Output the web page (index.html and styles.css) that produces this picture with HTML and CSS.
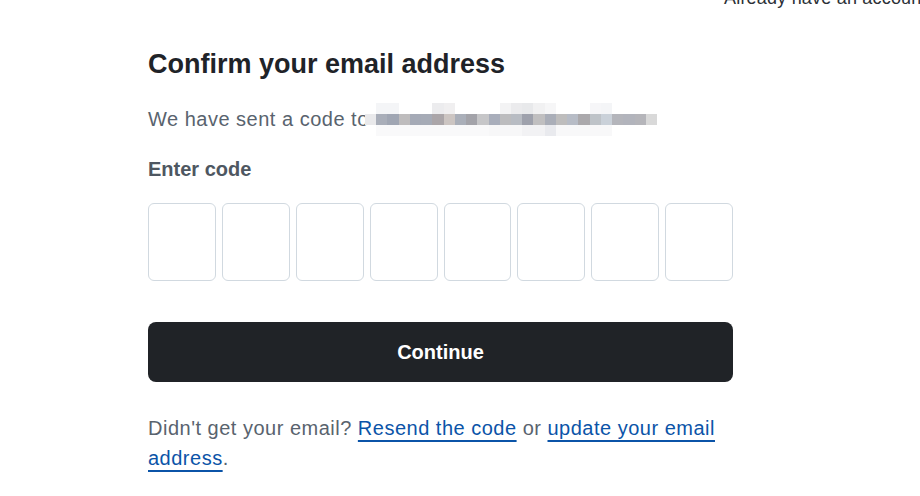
FILE: index.html
```html
<!DOCTYPE html>
<html lang="en">
<head>
<meta charset="utf-8">
<title>Confirm your email address</title>
<link rel="stylesheet" href="styles.css">
</head>
<body>
<div class="topbar">Already have an account? <a class="signin" href="#">Sign in</a></div>
<main class="panel">
  <h1 class="title">Confirm your email address</h1>
  <div class="sent">
    <span class="sent-text">We have sent a code to</span>
    <svg class="blur" viewBox="0 0 26 3" preserveAspectRatio="none" shape-rendering="crispEdges" aria-hidden="true">
      <g>
        <rect x="1" y="0" width="2" height="1" fill="#f4f5f7"/>
        <rect x="6" y="0" width="1" height="1" fill="#ececee"/>
        <rect x="7" y="0" width="1" height="1" fill="#f0eff0"/>
        <rect x="12" y="0" width="1" height="1" fill="#f3f3f4"/>
        <rect x="13" y="0" width="1" height="1" fill="#ebebed"/>
        <rect x="14" y="0" width="1" height="1" fill="#e8e9eb"/>
        <rect x="15" y="0" width="1" height="1" fill="#f1f1f2"/>
        <rect x="16" y="0" width="1" height="1" fill="#f6f6f7"/>
        <rect x="20" y="0" width="1" height="1" fill="#f6f6f8"/>
        <rect x="21" y="0" width="1" height="1" fill="#f4f5f7"/>
      </g>
      <g>
        <rect x="0" y="1" width="1" height="1" fill="#e9e9eb"/>
        <rect x="1" y="1" width="1" height="1" fill="#a9aeb9"/>
        <rect x="2" y="1" width="1" height="1" fill="#a0a6b3"/>
        <rect x="3" y="1" width="1" height="1" fill="#bebcbd"/>
        <rect x="4" y="1" width="1" height="1" fill="#a5aab6"/>
        <rect x="5" y="1" width="1" height="1" fill="#a6abb6"/>
        <rect x="6" y="1" width="1" height="1" fill="#aba6a9"/>
        <rect x="7" y="1" width="1" height="1" fill="#ccc5c2"/>
        <rect x="8" y="1" width="1" height="1" fill="#aaafb9"/>
        <rect x="9" y="1" width="1" height="1" fill="#a3a3a9"/>
        <rect x="10" y="1" width="1" height="1" fill="#c6c6c8"/>
        <rect x="11" y="1" width="1" height="1" fill="#a9aebb"/>
        <rect x="12" y="1" width="1" height="1" fill="#bcbcbe"/>
        <rect x="13" y="1" width="1" height="1" fill="#b8bcc3"/>
        <rect x="14" y="1" width="1" height="1" fill="#9ea1ac"/>
        <rect x="15" y="1" width="1" height="1" fill="#c0bfc0"/>
        <rect x="16" y="1" width="1" height="1" fill="#aaaeb8"/>
        <rect x="17" y="1" width="1" height="1" fill="#bebdbd"/>
        <rect x="18" y="1" width="1" height="1" fill="#b7bcc6"/>
        <rect x="19" y="1" width="1" height="1" fill="#aba9ac"/>
        <rect x="20" y="1" width="1" height="1" fill="#bec3c8"/>
        <rect x="21" y="1" width="1" height="1" fill="#cad1d9"/>
        <rect x="22" y="1" width="1" height="1" fill="#b4b5bb"/>
        <rect x="23" y="1" width="1" height="1" fill="#b2b4bc"/>
        <rect x="24" y="1" width="1" height="1" fill="#b5b5ba"/>
        <rect x="25" y="1" width="1" height="1" fill="#d9d9d9"/>
      </g>
      <g>
        <rect x="1" y="2" width="10" height="1" fill="#f9f9fa"/>
        <rect x="11" y="2" width="3" height="1" fill="#f7f7f8"/>
        <rect x="14" y="2" width="2" height="1" fill="#f2f2f4"/>
        <rect x="16" y="2" width="1" height="1" fill="#e9eaee"/>
        <rect x="17" y="2" width="5" height="1" fill="#f8f8f9"/>
      </g>
    </svg>
  </div>
  <label class="label">Enter code</label>
  <div class="code">
    <input class="digit" type="text" maxlength="1">
    <input class="digit" type="text" maxlength="1">
    <input class="digit" type="text" maxlength="1">
    <input class="digit" type="text" maxlength="1">
    <input class="digit" type="text" maxlength="1">
    <input class="digit" type="text" maxlength="1">
    <input class="digit" type="text" maxlength="1">
    <input class="digit" type="text" maxlength="1">
  </div>
  <button class="continue" type="button">Continue</button>
  <p class="help">Didn't get your email? <a class="link" href="#">Resend the code</a> or <a class="link" href="#">update your email address</a>.</p>
</main>
</body>
</html>
```

FILE: styles.css
```css
html, body {
  margin: 0;
  padding: 0;
  background: #ffffff;
}
body {
  font-family: "Liberation Sans", Arial, sans-serif;
  color: #1f2328;
  overflow: hidden;
  height: 496px;
}
.topbar {
  margin-top: -12px;
  height: 20px;
  line-height: 20px;
  padding-left: 724px;
  font-size: 18px;
  letter-spacing: 0.2px;
  color: #2b3036;
  white-space: nowrap;
}
.signin {
  color: #0b54a8;
}
.panel {
  width: 585px;
  margin-left: 148px;
  display: flex;
  flex-direction: column;
}
.title {
  margin: 39px 0 0;
  font-size: 27px;
  line-height: 34px;
  font-weight: 700;
  color: #1f2328;
}
.sent {
  margin-top: 26px;
  height: 24px;
  display: flex;
  align-items: center;
  font-size: 20px;
  letter-spacing: 0.5px;
  color: #59636e;
}
.sent-text {
  white-space: nowrap;
  line-height: 24px;
}
.blur {
  flex: none;
  width: 292px;
  height: 33px;
  margin-left: -4px;
}
.label {
  margin-top: 26px;
  font-size: 20px;
  line-height: 24px;
  font-weight: 700;
  color: #4e5761;
}
.code {
  margin-top: 22px;
  display: flex;
  gap: 6px;
}
.digit {
  flex: 1 1 0;
  min-width: 0;
  height: 78px;
  box-sizing: border-box;
  border: 1px solid #d1d9e0;
  border-radius: 6px;
  background: #ffffff;
  padding: 0;
  font-size: 28px;
  text-align: center;
  outline: none;
}
.continue {
  margin-top: 41px;
  height: 60px;
  border: 0;
  border-radius: 8px;
  background: #202327;
  color: #ffffff;
  font-family: "Liberation Sans", Arial, sans-serif;
  font-size: 20px;
  font-weight: 700;
}
.help {
  margin: 31px 0 0;
  font-size: 20px;
  letter-spacing: 0.5px;
  line-height: 30px;
  color: #59636e;
}
.link {
  color: #0b54a8;
  text-decoration: underline;
  text-decoration-thickness: 1.5px;
  text-underline-offset: 5px;
}
```
